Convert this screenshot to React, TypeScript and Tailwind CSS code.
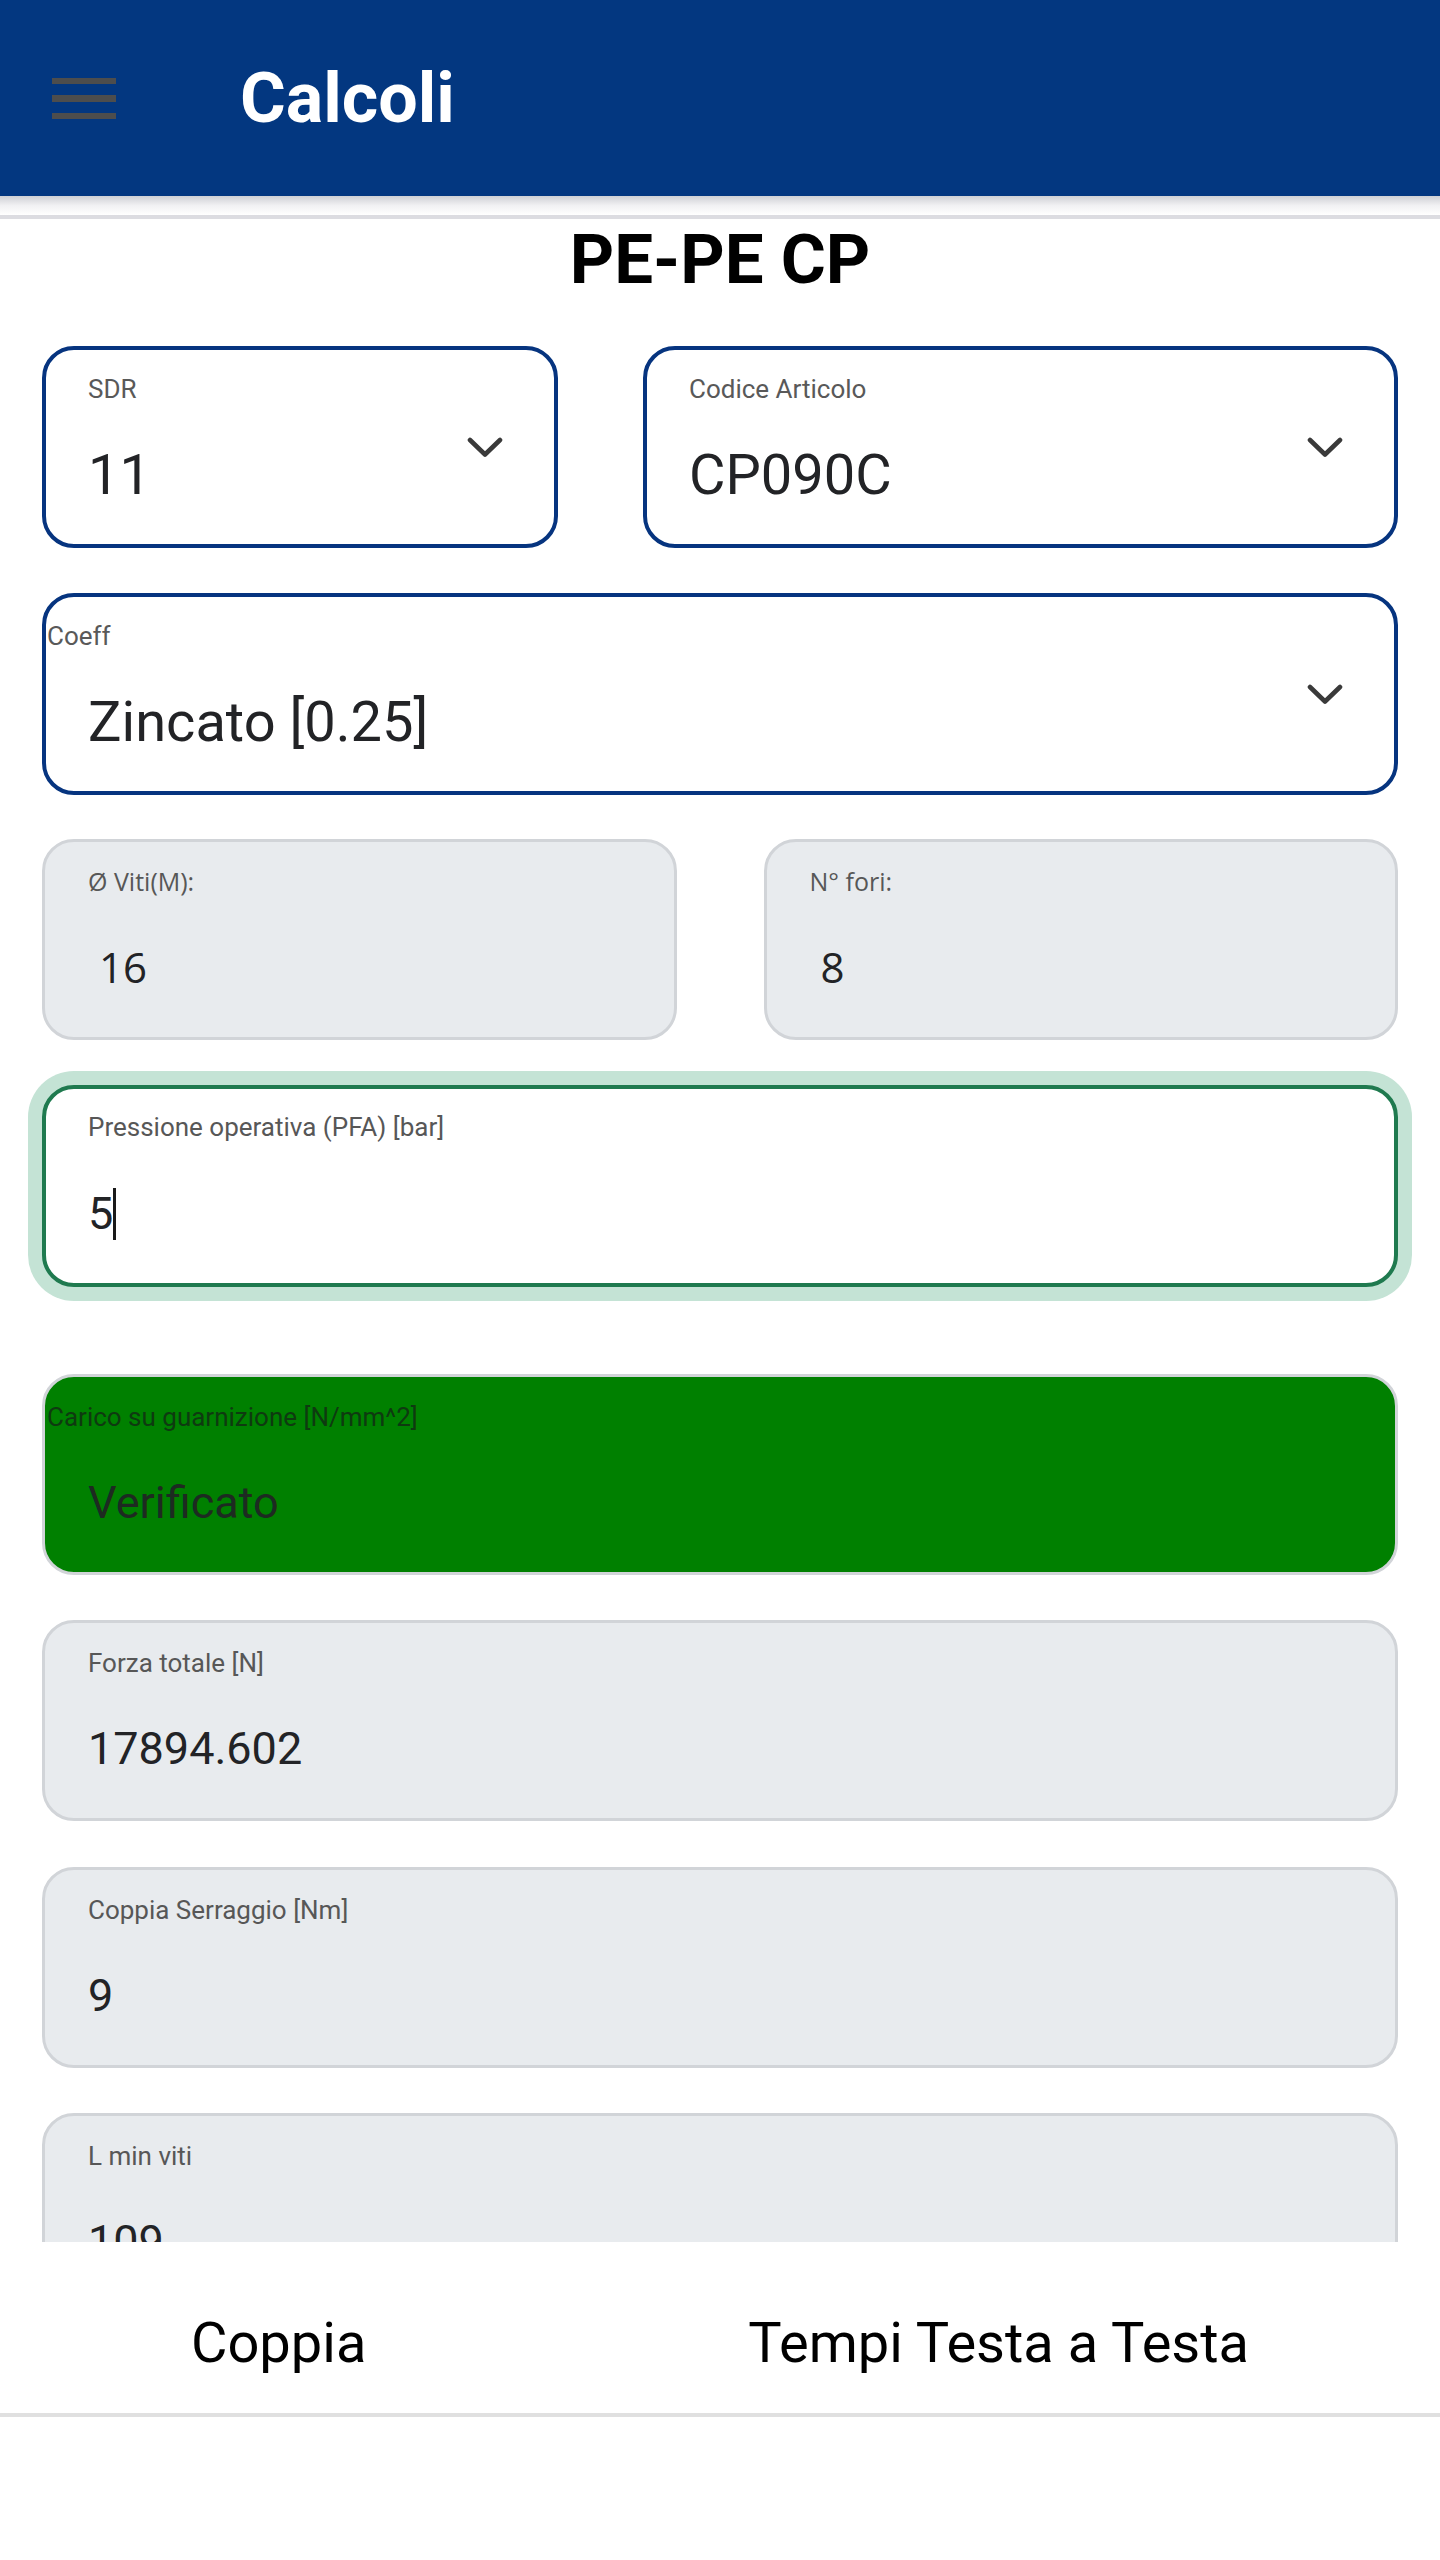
import React from "react";

const Chevron = () => (
  <svg width="36" height="21" viewBox="0 0 36 21" className="shrink-0">
    <polyline
      points="3,3 18,17.5 33,3"
      fill="none"
      stroke="#3a3a3a"
      strokeWidth="4.6"
      strokeLinecap="round"
      strokeLinejoin="round"
    />
  </svg>
);

function SelectBox({
  label,
  value,
  labelFlush,
  className,
}: {
  label: string;
  value: string;
  labelFlush?: boolean;
  className?: string;
}) {
  return (
    <div
      className={
        "relative h-[202px] rounded-[32px] border-[4px] border-[#06347f] bg-white flex items-center pr-[51px] " +
        (className ?? "")
      }
    >
      <div className="flex-1 self-stretch flex flex-col pt-[26px]">
        <div
          className={
            "text-[26px] leading-none text-[#595959] " +
            (labelFlush ? "pl-[1px]" : "pl-[42px]")
          }
        >
          {label}
        </div>
        <div className="mt-[45px] pl-[42px] text-[56px] leading-none text-[#222326]">
          {value}
        </div>
      </div>
      <Chevron />
    </div>
  );
}

function GrayBox({
  label,
  value,
  className,
}: {
  label: string;
  value: string;
  className?: string;
}) {
  return (
    <div
      className={
        "h-[201px] rounded-[32px] border-[3px] border-[#d1d4d8] bg-[#e8ebee] flex flex-col pt-[27px] pl-[43px] " +
        (className ?? "")
      }
    >
      <div className="text-[26px] leading-none text-[#575757]">{label}</div>
      <div className="mt-[50px] text-[45px] leading-none text-[#222326]">{value}</div>
    </div>
  );
}

function OpenSansBox({ label, value }: { label: string; value: string }) {
  return (
    <div className="h-[201px] rounded-[32px] border-[3px] border-[#d1d4d8] bg-[#e8ebee] flex flex-col pt-[27px] pl-[43px] font-['Open_Sans',sans-serif]">
      <div className="text-[25px] leading-none text-[#575757]">{label}</div>
      <div className="mt-[52px] pl-[11px] text-[42px] leading-none text-[#222326]">{value}</div>
    </div>
  );
}

export default function App() {
  return (
    <div className="w-[1440px] h-[2560px] bg-white flex flex-col overflow-hidden font-['Roboto','Liberation_Sans',sans-serif]">
      {/* Header */}
      <header className="h-[196px] shrink-0 bg-[#033780] flex items-center pl-[52px]">
        <div className="flex flex-col gap-[11px]">
          <div className="w-[64px] h-[6px] bg-[#4d4d4d]" />
          <div className="w-[64px] h-[7px] bg-[#4d4d4d]" />
          <div className="w-[64px] h-[6px] bg-[#4d4d4d]" />
        </div>
        <div className="ml-[124px] text-[70px] leading-none font-bold text-white">Calcoli</div>
      </header>
      <div className="h-[19px] shrink-0 bg-gradient-to-b from-[#cfd0d5] via-[#f1f1f3] to-white" />
      <div className="h-[4px] shrink-0 bg-[#dcdce1]" />

      {/* Scrollable content */}
      <main className="h-[2023px] shrink-0 overflow-hidden">
        <h1 className="mt-[6px] text-center text-[69px] leading-none font-bold text-black">PE-PE CP</h1>

        <div className="px-[42px]">
          <div className="mt-[52px] flex gap-[85px]">
            <SelectBox label="SDR" value="11" className="w-[516px] shrink-0" />
            <SelectBox label="Codice Articolo" value="CP090C" className="flex-1" />
          </div>

          <SelectBox label="Coeff" value="Zincato [0.25]" labelFlush className="mt-[45px]" />

          <div className="mt-[44px] grid grid-cols-2 gap-x-[87px]">
            <OpenSansBox label="Ø Viti(M):" value="16" />
            <OpenSansBox label="N° fori:" value="8" />
          </div>

          <div className="mt-[45px] h-[202px] rounded-[32px] border-[4px] border-[#1f7a4f] ring-[14px] ring-[#c4e3d5] bg-white flex flex-col pt-[25px] pl-[42px]">
            <div className="text-[26px] leading-none text-[#575757]">
              Pressione operativa (PFA) [bar]
            </div>
            <div className="mt-[51px] h-[45px] flex items-center">
              <span className="text-[45px] leading-none text-[#222326]">5</span>
              <span className="w-[3px] h-[52px] bg-[#1a1a1a] shrink-0" />
            </div>
          </div>

          <div className="mt-[87px] h-[201px] rounded-[32px] border-[3px] border-[#d1d4d8] bg-[#008000] flex flex-col pt-[27px]">
            <div className="pl-[2px] text-[26px] leading-none text-[#0e3a10]">
              Carico su guarnizione [N/mm^2]
            </div>
            <div className="mt-[50px] pl-[43px] text-[45px] leading-none text-[#1d2a21]">
              Verificato
            </div>
          </div>

          <GrayBox label="Forza totale [N]" value="17894.602" className="mt-[45px]" />
          <GrayBox label="Coppia Serraggio [Nm]" value="9" className="mt-[46px]" />
          <GrayBox label="L min viti" value="109" className="mt-[45px]" />
        </div>
      </main>

      {/* Bottom tabs */}
      <nav className="h-[175px] shrink-0 bg-white border-b-[4px] border-[#e0e0e0] flex pt-[73px]">
        <div className="flex-auto text-center text-[56px] leading-none text-black">Coppia</div>
        <div className="flex-auto text-center text-[56px] leading-none text-black">Tempi Testa a Testa</div>
      </nav>
    </div>
  );
}
